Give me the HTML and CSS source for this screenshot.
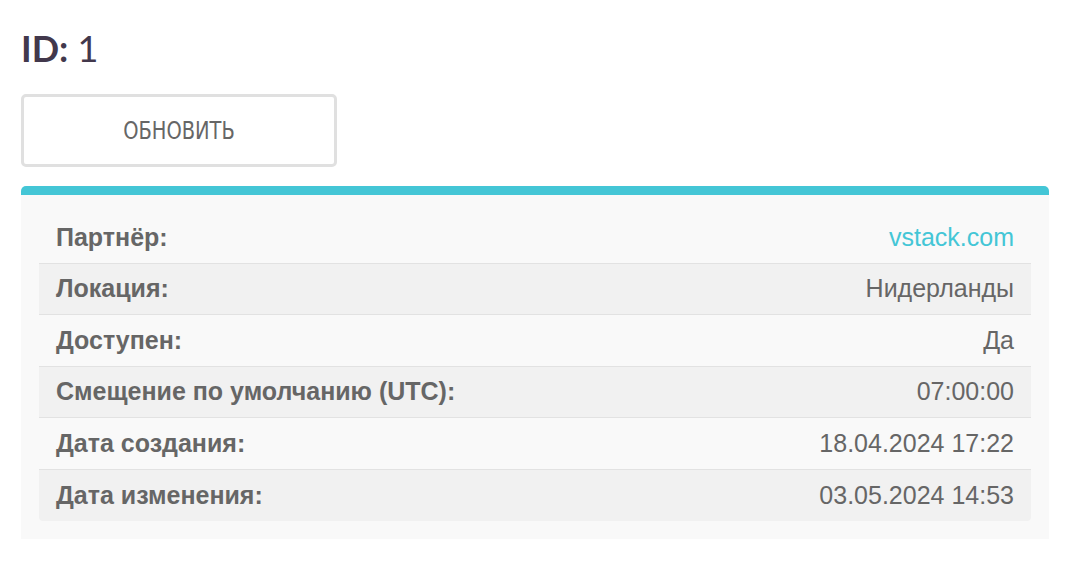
FILE: index.html
```html
<!DOCTYPE html>
<html lang="ru">
  <head>
    <meta charset="UTF-8">
    <meta name="viewport" content="width=device-width, initial-scale=1.0">
    <title>Локация</title>
    <link rel="stylesheet" href="styles.css">
  </head>

  <body>
    <div class="page">
      <h1 class="page-title"><strong>ID:</strong> 1</h1>

      <div class="toolbar">
        <button class="refresh-button" type="button">
          <span class="refresh-label">Обновить</span>
        </button>
      </div>

      <div class="card">
        <table class="details">
          <tbody>
            <tr>
              <th>Партнёр:</th>
              <td><a href="#">vstack.com</a></td>
            </tr>
            <tr>
              <th>Локация:</th>
              <td>Нидерланды</td>
            </tr>
            <tr>
              <th>Доступен:</th>
              <td>Да</td>
            </tr>
            <tr>
              <th>Смещение по умолчанию (UTC):</th>
              <td>07:00:00</td>
            </tr>
            <tr>
              <th>Дата создания:</th>
              <td>18.04.2024 17:22</td>
            </tr>
            <tr>
              <th>Дата изменения:</th>
              <td>03.05.2024 14:53</td>
            </tr>
          </tbody>
        </table>
      </div>
    </div>
  </body>
</html>
```

FILE: styles.css
```css
body {
  margin: 0;
  background-color: #ffffff;
  font-family: "Liberation Sans", Arial, sans-serif;
}

.page {
  padding: 26px 17px 0 21px;
}

.page-title {
  margin: 0;
  font-family: Lato, sans-serif;
  font-size: 36px;
  font-weight: 400;
  line-height: 44px;
  color: #42384c;
}

.page-title strong {
  font-weight: 700;
}

.toolbar {
  padding-top: 24px;
  padding-bottom: 19px;
}

.refresh-button {
  display: flex;
  align-items: center;
  justify-content: center;
  width: 316px;
  height: 73px;
  padding: 0;
  background-color: #ffffff;
  border: 3px solid #e0e0e0;
  border-radius: 5px;
  cursor: pointer;
}

.refresh-label {
  display: inline-block;
  font-family: "DejaVu Sans Condensed", "DejaVu Sans", sans-serif;
  font-stretch: condensed;
  font-size: 24px;
  text-transform: uppercase;
  color: #666666;
  transform: scaleX(0.9);
}

.card {
  width: 1028px;
  padding: 18px;
  box-sizing: border-box;
  background-color: #f9f9f9;
  border-top: 9px solid #44c6d6;
  border-radius: 5px 5px 0 0;
}

.details {
  width: 100%;
  border-collapse: collapse;
  font-size: 25px;
  color: #666666;
}

.details th,
.details td {
  height: 50px;
  padding: 0 17px;
  box-sizing: border-box;
  white-space: nowrap;
}

.details th {
  text-align: left;
  font-weight: 700;
}

.details td {
  text-align: right;
  font-weight: 400;
}

.details tr + tr th,
.details tr + tr td {
  border-top: 1px solid #e2e2e2;
  height: 51.6px;
}

.details tr:nth-child(even) {
  background-color: #f1f1f1;
}

.details tr:last-child th {
  border-bottom-left-radius: 4px;
}

.details tr:last-child td {
  border-bottom-right-radius: 4px;
}

.details a {
  color: #44c6d6;
  text-decoration: none;
}
```
